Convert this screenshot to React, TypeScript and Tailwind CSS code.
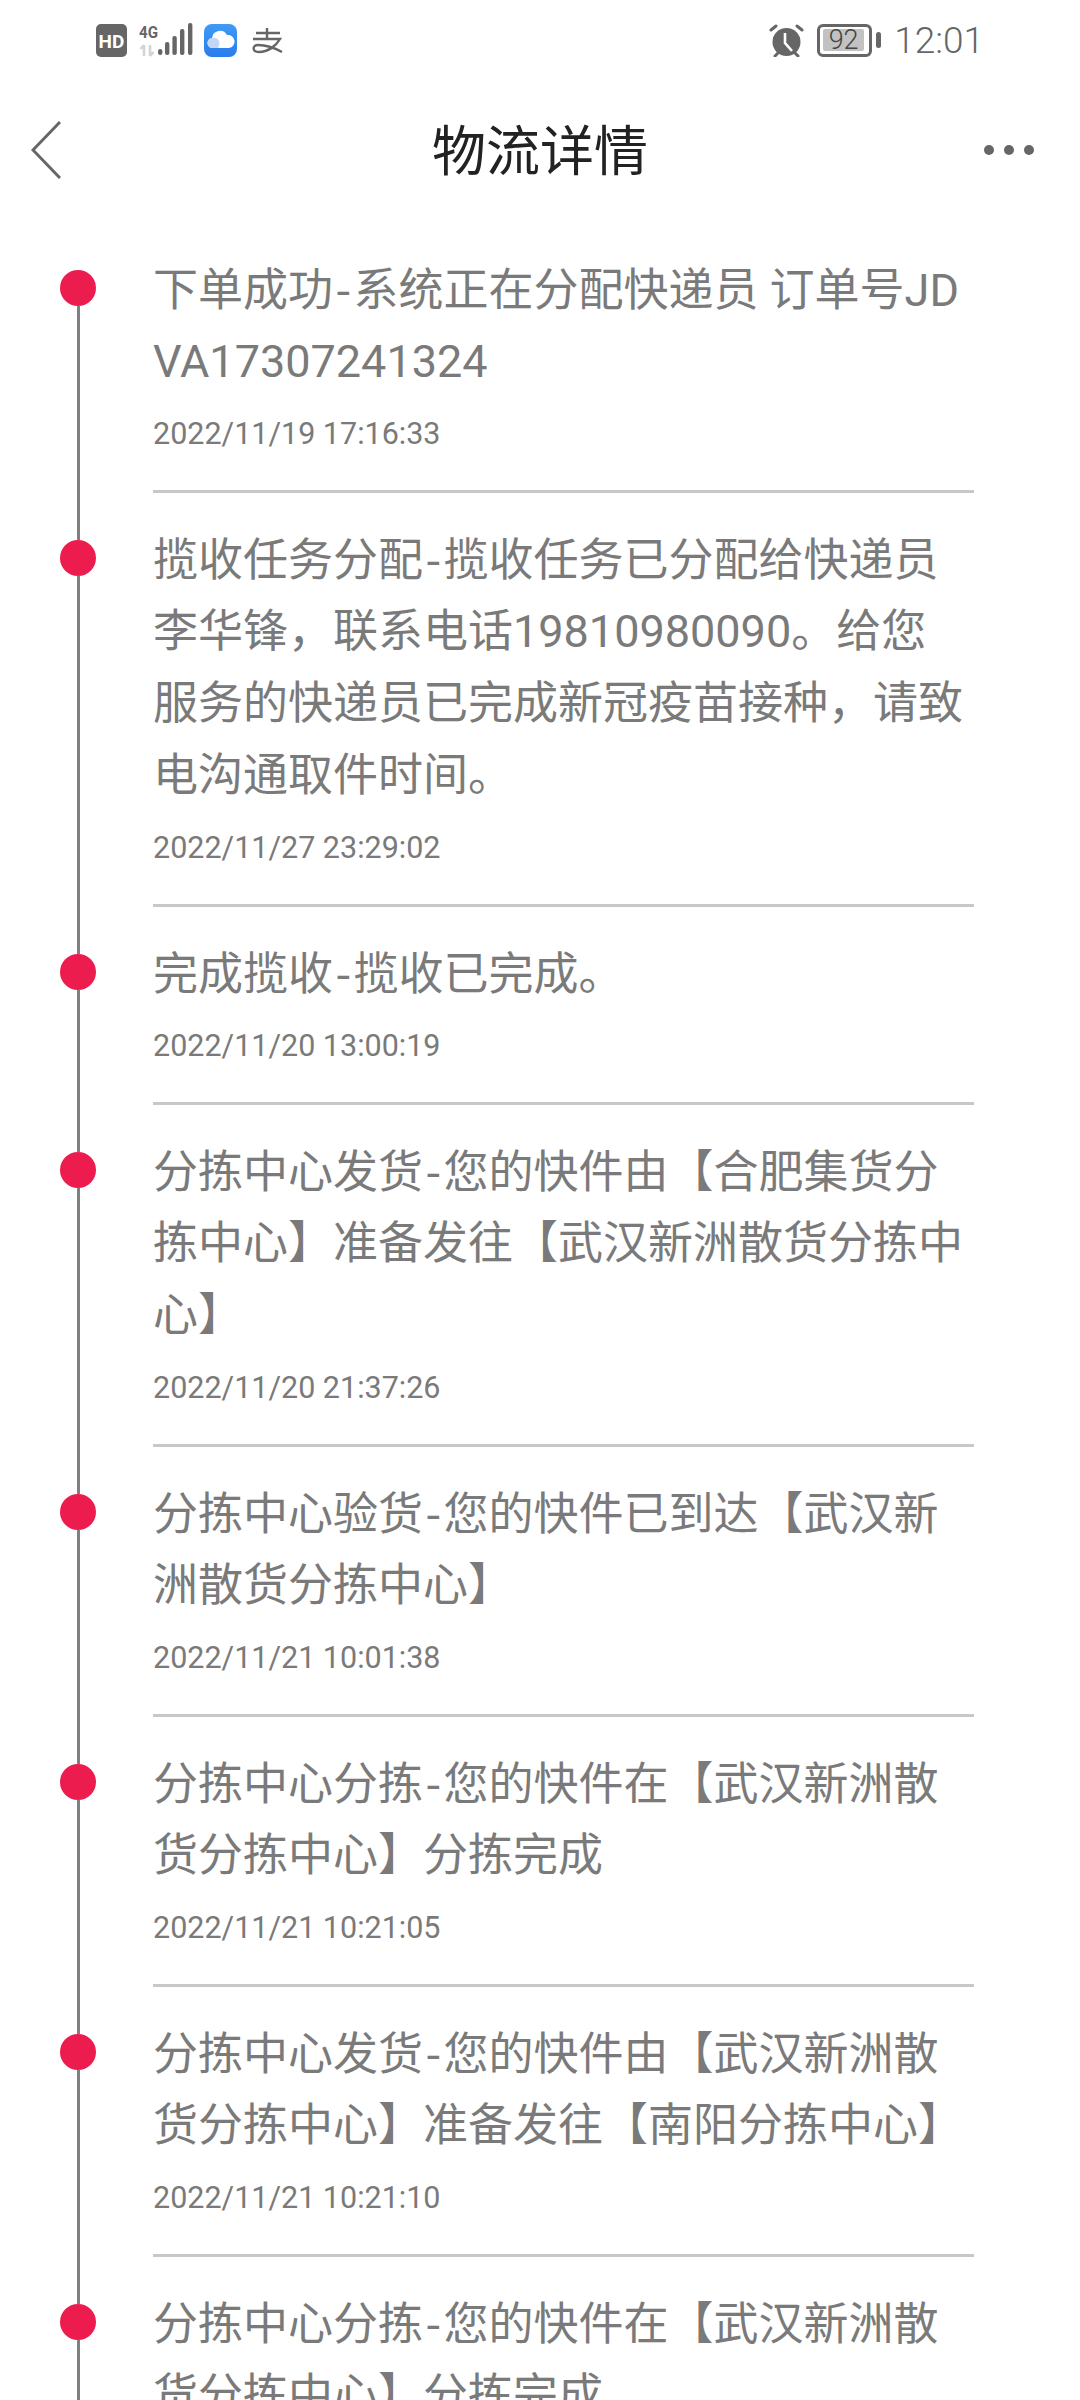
const rows: { lines: string[]; time: string }[] = [
  { lines: ["下单成功-系统正在分配快递员 订单号JD", "VA17307241324"], time: "2022/11/19 17:16:33" },
  { lines: ["揽收任务分配-揽收任务已分配给快递员", "李华锋，联系电话19810980090。给您", "服务的快递员已完成新冠疫苗接种，请致", "电沟通取件时间。"], time: "2022/11/27 23:29:02" },
  { lines: ["完成揽收-揽收已完成。"], time: "2022/11/20 13:00:19" },
  { lines: ["分拣中心发货-您的快件由【合肥集货分", "拣中心】准备发往【武汉新洲散货分拣中", "心】"], time: "2022/11/20 21:37:26" },
  { lines: ["分拣中心验货-您的快件已到达【武汉新", "洲散货分拣中心】"], time: "2022/11/21 10:01:38" },
  { lines: ["分拣中心分拣-您的快件在【武汉新洲散", "货分拣中心】分拣完成"], time: "2022/11/21 10:21:05" },
  { lines: ["分拣中心发货-您的快件由【武汉新洲散", "货分拣中心】准备发往【南阳分拣中心】"], time: "2022/11/21 10:21:10" },
  { lines: ["分拣中心分拣-您的快件在【武汉新洲散", "货分拣中心】分拣完成"], time: "2022/11/21 10:21:12" },
];

function StatusLeft() {
  return (
    <div className="flex items-center">
      <svg width="31" height="33" viewBox="0 0 31 33">
        <rect width="31" height="33" rx="5" fill="#666" />
        <text x="15.5" y="23.5" textAnchor="middle" fontSize="19" fontWeight="700" fill="#fff" fontFamily="Roboto">HD</text>
      </svg>
      <svg className="ml-[12px]" width="54" height="34" viewBox="0 0 54 34">
        <text x="0" y="15" fontSize="17" fontWeight="700" fill="#666" fontFamily="Roboto" textLength="19" lengthAdjust="spacingAndGlyphs">4G</text>
        <path d="M5 33V22M1.5 26L5 22M11 22v11M11 33l3.5-4" stroke="#d4d4d4" strokeWidth="2.6" fill="none" />
        <rect x="19" y="26" width="4.4" height="6" rx="2.2" fill="#666" />
        <rect x="26" y="19" width="4.4" height="13" rx="2" fill="#666" />
        <rect x="33.4" y="13" width="4.4" height="19" rx="2" fill="#666" />
        <rect x="41" y="6" width="4.4" height="26" rx="2" fill="#666" />
        <rect x="49" y="0" width="4.4" height="32" rx="2" fill="#666" />
      </svg>
      <svg className="ml-[11px]" width="33" height="33" viewBox="0 0 33 33">
        <defs>
          <linearGradient id="cloudBg" x1="0" y1="0" x2="0" y2="1">
            <stop offset="0" stopColor="#3f9bf5" />
            <stop offset="1" stopColor="#2a7ceb" />
          </linearGradient>
        </defs>
        <rect width="33" height="33" rx="8" fill="url(#cloudBg)" />
        <path d="M9 24a5 5 0 0 1-1-10 8 8 0 0 1 15-3 6.5 6.5 0 0 1 2 13z" fill="#fff" />
        <path d="M9 24a5 5 0 0 1-1-10c2-1 6 0 7 3 1 3 0 5-1 7z" fill="#c3d6f6" />
      </svg>
      <svg className="ml-[13px]" width="33" height="27" viewBox="0 0 33 27">
        <path d="M6 6h24M17 1v11M3 12h27C26 19 18 25 9 25c-7 0-7-7-1-7 7 0 15 2 24 7" stroke="#666" strokeWidth="2.4" fill="none" />
      </svg>
    </div>
  );
}

function StatusRight() {
  return (
    <div className="flex items-center">
      <svg width="35" height="33" viewBox="0 0 35 33">
        <circle cx="17.5" cy="18" r="14" fill="#666" />
        <path d="M2 6l5-4M33 6l-5-4M6 32l3-3M29 32l-3-3" stroke="#666" strokeWidth="3" strokeLinecap="round" />
        <path d="M16 9v10l7 8" stroke="#fff" strokeWidth="2.6" fill="none" />
      </svg>
      <div className="ml-[13px] flex h-[33px] w-[55px] items-center rounded-[6px] border-[3px] border-[#666] pl-[3px]">
        <span className="flex h-[22px] w-[41px] items-center justify-center rounded-[2px] bg-[#c2c2c2] font-['Roboto'] text-[27px] leading-none font-light text-[#444]">92</span>
      </div>
      <div className="ml-[4px] h-[16px] w-[5px] rounded-full bg-[#666]" />
      <span className="ml-[13px] font-['Roboto'] text-[37px] leading-none font-light text-[#666]">12:01</span>
    </div>
  );
}

function Line({ text }: { text: string }) {
  const at = text.indexOf("-");
  if (at < 0) return <div className="h-[72px] pt-[3px]">{text}</div>;
  return (
    <div className="h-[72px]">
      {text.slice(0, at)}
      <span className="mx-[2.4px] font-['Noto_Sans_CJK_SC']">-</span>
      {text.slice(at + 1)}
    </div>
  );
}

function Row({ lines, time, first }: { lines: string[]; time: string; first: boolean }) {
  return (
    <div className="flex">
      <div className="flex w-[153px] shrink-0 flex-col pl-[60px]">
        <div className="flex w-[36px] flex-1 flex-col items-center">
          <div className={first ? "h-[47px] w-[3px]" : "h-[47px] w-[3px] bg-[#808080]"} />
          <div className="h-[36px] w-[36px] shrink-0 rounded-full bg-[#ec1c4e]" />
          <div className="w-[3px] flex-1 bg-[#808080]" />
        </div>
      </div>
      <div className="w-[821px] pt-[28px]">
        <div className="text-[45px] leading-[72px] whitespace-nowrap text-[#7a7a7a]">
          {lines.map((l) => (
            <Line key={l} text={l} />
          ))}
        </div>
        <div className="mt-[19px] text-[30.5px] leading-[40px] text-[#7a7a7a]">{time}</div>
        <div className="mt-[36px] h-[3px] bg-[#c8c8c8]" />
      </div>
    </div>
  );
}

export default function App() {
  return (
    <div className="h-[2400px] w-[1080px] overflow-hidden bg-white font-['Roboto','Noto_Sans_CJK_SC',sans-serif]">
      <div className="flex h-[80px] items-center justify-between pr-[96px] pl-[96px]">
        <StatusLeft />
        <StatusRight />
      </div>
      <div className="flex h-[140px] items-center px-[31px]">
        <div className="flex-1">
          <svg width="30" height="58" viewBox="0 0 30 58">
            <path d="M29 1L2 29l27 28" stroke="#666" strokeWidth="3" fill="none" />
          </svg>
        </div>
        <span className="mt-[6px] text-[54px] leading-none text-[#222]">物流详情</span>
        <div className="flex flex-1 justify-end">
          <div className="mr-[15px] flex gap-[10px]">
            <div className="h-[10px] w-[10px] rounded-full bg-[#666]" />
            <div className="h-[10px] w-[10px] rounded-full bg-[#666]" />
            <div className="h-[10px] w-[10px] rounded-full bg-[#666]" />
          </div>
        </div>
      </div>
      <div className="pt-[3px]">
        {rows.map((r, i) => (
          <Row key={i} lines={r.lines} time={r.time} first={i === 0} />
        ))}
      </div>
    </div>
  );
}
